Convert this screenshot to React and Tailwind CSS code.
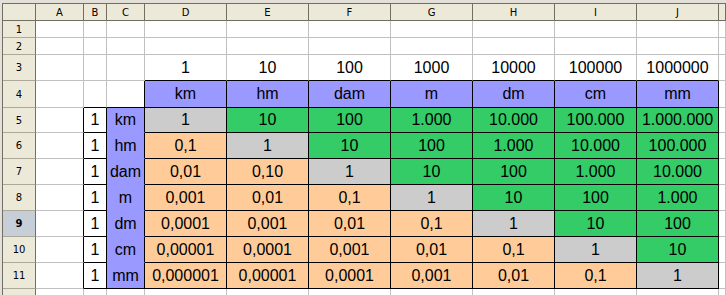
import React from 'react';

const letters = ['A', 'B', 'C', 'D', 'E', 'F', 'G', 'H', 'I', 'J', ''];
const units = ['km', 'hm', 'dam', 'm', 'dm', 'cm', 'mm'];
const powers = ['1', '10', '100', '1000', '10000', '100000', '1000000'];

const values = [
    ['1', '10', '100', '1.000', '10.000', '100.000', '1.000.000'],
    ['0,1', '1', '10', '100', '1.000', '10.000', '100.000'],
    ['0,01', '0,10', '1', '10', '100', '1.000', '10.000'],
    ['0,001', '0,01', '0,1', '1', '10', '100', '1.000'],
    ['0,0001', '0,001', '0,01', '0,1', '1', '10', '100'],
    ['0,00001', '0,0001', '0,001', '0,01', '0,1', '1', '10'],
    ['0,000001', '0,00001', '0,0001', '0,001', '0,01', '0,1', '1'],
];

// the black-framed block: B5:C11 and D4:J11
const inBox = (r, c) => {
    if (c === 1 || c === 2) return r >= 5 && r <= 11;
    if (c >= 3 && c <= 9) return r >= 4 && r <= 11;
    return false;
};

const cellContent = (r, c) => {
    if (r === 3 && c >= 3 && c <= 9) return { text: powers[c - 3], bg: 'bg-white' };
    if (r === 4 && c >= 3 && c <= 9) return { text: units[c - 3], bg: 'bg-[#9999ff]' };
    if (r >= 5 && r <= 11) {
        const i = r - 5;
        if (c === 1) return { text: '1', bg: 'bg-white' };
        if (c === 2) return { text: units[i], bg: 'bg-[#9999ff]' };
        if (c >= 3 && c <= 9) {
            const j = c - 3;
            const bg = j === i ? 'bg-[#cccccc]' : j > i ? 'bg-[#33cc66]' : 'bg-[#ffcc99]';
            return { text: values[i][j], bg };
        }
    }
    return { text: '', bg: 'bg-white' };
};

const Cell = ({ r, c }) => {
    const { text, bg } = cellContent(r, c);
    const rightBlack = inBox(r, c) || inBox(r, c + 1);
    let bottom = 'border-b-[#c0c0c0]';
    if (inBox(r, c) || inBox(r + 1, c)) bottom = 'border-b-black';
    if (c === 2 && r >= 5 && r <= 10) bottom = 'border-b-[#9999ff]';
    return (
        <div
            className={`flex items-center justify-center overflow-hidden whitespace-nowrap border-r border-b text-[16px] leading-none text-black ${bg} ${
                rightBlack ? 'border-r-black' : 'border-r-[#c0c0c0]'
            } ${bottom}`}
        >
            {text}
        </div>
    );
};

const App = () => {
    const rows = Array.from({ length: 12 }, (_, i) => i + 1);
    return (
        <div className="w-[726px] h-[295px] overflow-hidden bg-[#e2e0d8] pl-[2px] pt-[3px] font-['Liberation_Sans',Arial,sans-serif]">
            <div className="grid grid-cols-[33px_48px_23px_38px_82px_82px_82px_82px_82px_82px_82px_1fr] grid-rows-[17px_17px_17px_26px_27px_25px_26px_26px_26px_26px_26px_26px_20px] border-l border-t border-[#716f64] bg-white">
                {/* Column header */}
                <div className="bg-[#ece9d8] border-r border-b border-[#716f64]" />
                {letters.map((l, i) => (
                    <div
                        key={i}
                        className="flex items-center justify-center bg-[#ece9d8] border-r border-b border-[#716f64] font-['DejaVu_Sans',sans-serif] text-[10px] text-black"
                    >
                        {l}
                    </div>
                ))}

                {rows.map((r) => (
                    <React.Fragment key={r}>
                        {/* row 12 is only a sliver at the bottom, its number falls outside */}
                        <div
                            className={`flex items-center justify-center border-r border-r-[#716f64] border-b border-b-[#aca899] font-['DejaVu_Sans',sans-serif] text-[10px] text-black ${
                                r === 9 ? 'bg-[#c6ced8] font-bold' : 'bg-[#ece9d8]'
                            }`}
                        >
                            {r < 12 ? r : ''}
                        </div>
                        {letters.map((_, c) => (
                            <Cell key={c} r={r} c={c} />
                        ))}
                    </React.Fragment>
                ))}
            </div>
        </div>
    );
};

export default App;
